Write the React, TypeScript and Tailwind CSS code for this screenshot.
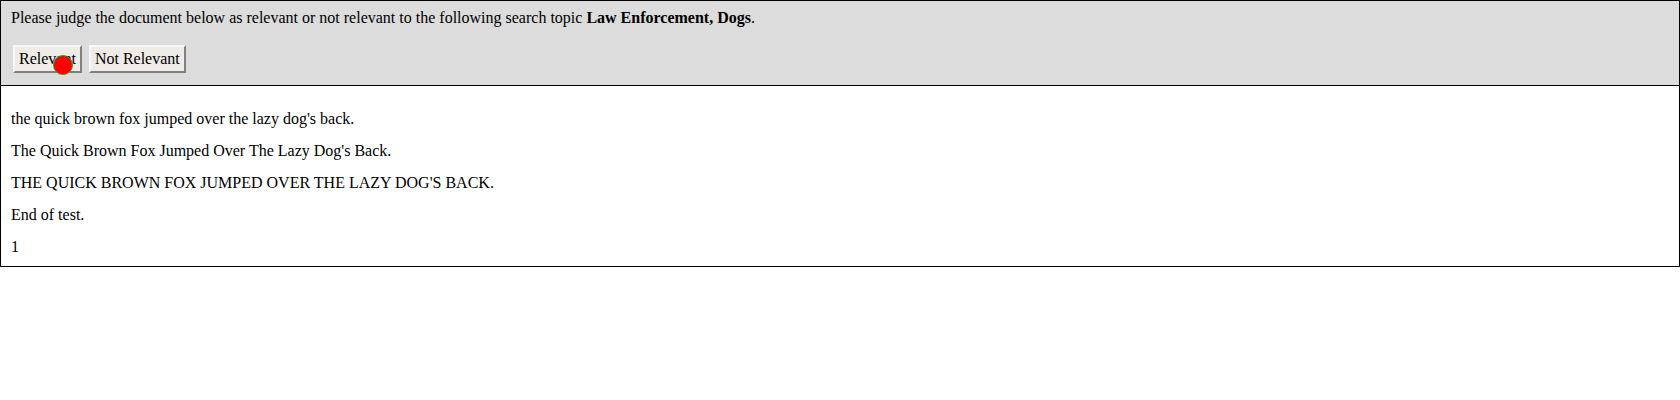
export default function App() {
    return (
        <div className="w-[1680px] h-[400px] bg-white font-['Liberation_Serif',serif] text-[16px] text-black">
            <div className="border border-black">
                {/* Judging header */}
                <div className="bg-[#dcdcdc] border-b border-black pl-[10px] pt-[8px] pb-[12px]">
                    <p className="leading-[18px]">
                        Please judge the document below as relevant or not relevant to the following search topic{' '}
                        <b>Law Enforcement, Dogs</b>.
                    </p>
                    <div className="flex gap-[7px] mt-[18px] pl-[2px]">
                        <button className="relative h-[28px] px-[4px] bg-[#efebe7] border-2 border-t-[#f8f8f8] border-l-[#f8f8f8] border-r-[#808080] border-b-[#808080] leading-none">
                            Relevant
                            <span className="absolute left-[38px] top-[8px] w-[20px] h-[20px] rounded-full bg-[#ff0000] border border-[#3c9a2a]" />
                        </button>
                        <button className="h-[28px] px-[4px] bg-[#efebe7] border-2 border-t-[#f8f8f8] border-l-[#f8f8f8] border-r-[#808080] border-b-[#808080] leading-none">
                            Not Relevant
                        </button>
                    </div>
                </div>

                {/* Document */}
                <div className="pl-[10px] pt-[25px] pb-[11px] flex flex-col gap-[16px] leading-[16px]">
                    <p>the quick brown fox jumped over the lazy dog's back.</p>
                    <p>The Quick Brown Fox Jumped Over The Lazy Dog's Back.</p>
                    <p>THE QUICK BROWN FOX JUMPED OVER THE LAZY DOG'S BACK.</p>
                    <p>End of test.</p>
                    <p>1</p>
                </div>
            </div>
        </div>
    );
}
